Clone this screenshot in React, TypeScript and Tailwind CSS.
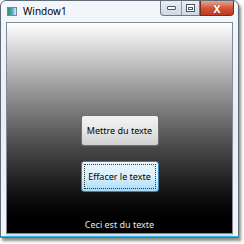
export default function App() {
  const font = { fontFamily: '"Noto Sans", "Open Sans", sans-serif' };
  return (
    <div className="w-[244px] h-[244px] bg-white" style={font}>
      <div className="w-[239px] h-[238px] flex flex-col rounded-t-[6px] border border-[#5f6b78] bg-gradient-to-b from-[#f4f7fa] via-[#e9eef3] to-[#f2f5f8] shadow-[2px_3px_3px_rgba(0,0,0,0.45)]">
        <div className="h-[21px] flex items-start relative">
          <div className="mt-[6px] ml-[6px] w-[10px] h-[9px] border border-[#7a8794] bg-gradient-to-r from-[#3d8f6a] via-[#4aa3c8] to-[#e0ecf4]" />
          <span className="ml-[6px] mt-[4px] text-[10px] leading-[13px] text-black whitespace-nowrap">Window1</span>
          <div className="ml-auto mr-[4px] flex">
            <div className="flex h-[15px] border border-t-0 border-[#6d7885] rounded-bl-[4px] bg-gradient-to-b from-[#e9eef3] to-[#cfd8e2]">
              <div className="w-[21px] flex items-center justify-center border-r border-[#8a96a3]">
                <div className="w-[9px] h-[4px] border border-[#4b5662] bg-white rounded-[1px]" />
              </div>
              <div className="w-[17px] flex items-center justify-center">
                <div className="w-[9px] h-[8px] border border-[#4b5662] bg-white flex items-center justify-center">
                  <div className="w-[5px] h-[3px] border border-[#4b5662]" />
                </div>
              </div>
            </div>
            <div className="w-[34px] h-[15px] flex items-center justify-center border border-t-0 border-[#7a2a1e] rounded-br-[4px] bg-gradient-to-b from-[#e8a392] via-[#d2553d] to-[#c0391f]">
              <span className="text-[11px] leading-none font-bold text-white [text-shadow:0_0_1px_#5a1a10]">X</span>
            </div>
          </div>
        </div>
        <div className="mx-[5px] h-[212px] border border-[#7f8b98] bg-gradient-to-b from-[#ffffff] to-[#000000] flex flex-col items-center">
          <div className="mt-[92px] w-[78px] h-[31px] rounded-[3px] border border-[#707070] bg-gradient-to-b from-[#f3f3f3] via-[#e6e6e6] to-[#cfcfcf] flex items-center justify-center">
            <span className="text-[9px] text-black whitespace-nowrap">Mettre du texte</span>
          </div>
          <div className="mt-[15px] w-[78px] h-[31px] rounded-[3px] border border-[#3c7fb1] bg-gradient-to-b from-[#eaf6fd] via-[#d9f0fc] to-[#a7d9f5] p-[2px]">
            <div className="w-full h-full border border-dotted border-[#333] flex items-center justify-center">
              <span className="text-[9px] text-black whitespace-nowrap">Effacer le texte</span>
            </div>
          </div>
          <span className="mt-auto mb-[2px] text-[9px] leading-[12px] text-[#e6e6e6] whitespace-nowrap">Ceci est du texte</span>
        </div>
        <div className="mx-[5px] h-[2px] bg-[#d8dcf5]" />
        <div className="h-[1px] bg-[#2fb8e0]" />
      </div>
    </div>
  );
}
